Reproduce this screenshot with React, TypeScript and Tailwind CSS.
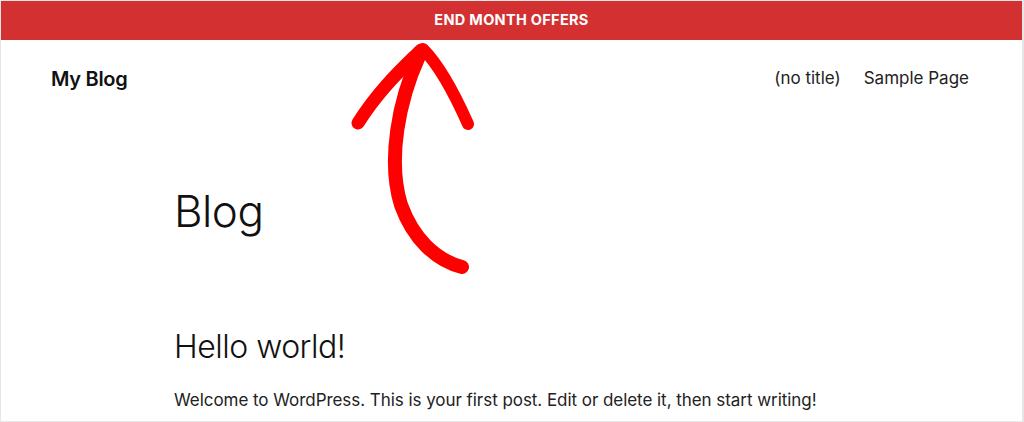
export default function App() {
  return (
    <div
      className="relative w-[1024px] h-[422px] overflow-hidden bg-white border-t border-l border-b border-r-2 border-[#e6e6e6] text-[#111]"
      style={{ fontFamily: "Inter, 'Noto Sans', sans-serif" }}
    >
      {/* top banner */}
      <div className="h-[39px] pb-[1px] bg-[#d33131] flex items-center justify-center">
        <span className="text-white font-bold text-[14.5px] tracking-[0.3px]">END MONTH OFFERS</span>
      </div>

      {/* header */}
      <header className="h-[74px] pt-[3px] flex items-center justify-between pl-[50px] pr-[53px]">
        <a className="text-[20px] font-semibold tracking-[-0.3px] text-[#111]">My Blog</a>
        <nav className="flex items-center gap-[23px] text-[17px] text-[#222]">
          <a>(no title)</a>
          <a>Sample Page</a>
        </nav>
      </header>

      {/* content */}
      <main className="pl-[173px]">
        <h1 className="mt-[75px] text-[44px] leading-none font-light tracking-[-0.5px] text-[#111]">Blog</h1>
        <h2 className="mt-[98px] text-[32px] leading-none font-light tracking-[-0.5px] text-[#111]">Hello world!</h2>
        <p className="mt-[29px] text-[17px] leading-none tracking-[-0.05px] text-[#222]">
          Welcome to WordPress. This is your first post. Edit or delete it, then start writing!
        </p>
      </main>

      {/* hand-drawn arrow */}
      <svg
        className="absolute top-[-1px] left-[-1px] pointer-events-none"
        width="1024"
        height="422"
        viewBox="0 0 1024 422"
        fill="none"
      >
        <g stroke="#ff0000" strokeLinecap="round" strokeLinejoin="round">
          <path d="M419 56 C 399 100, 387 160, 401 205 C 413 238, 435 260, 462 267" strokeWidth="14" />
          <path d="M421 50 C 405 66, 380 88, 358 123" strokeWidth="13" />
          <path d="M423 49 C 440 66, 456 97, 468 124" strokeWidth="12" />
        </g>
      </svg>
    </div>
  );
}
